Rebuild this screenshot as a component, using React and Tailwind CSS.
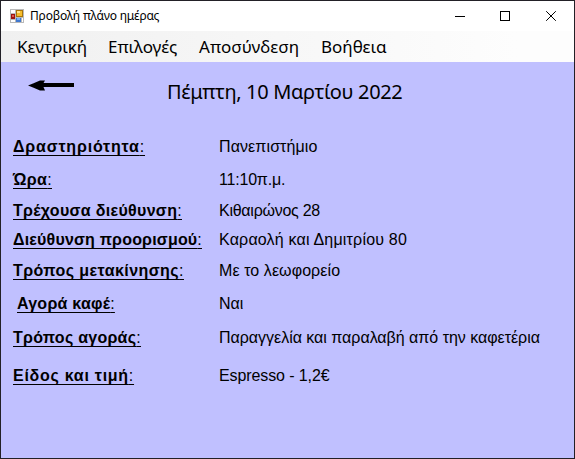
const MENU = [
  { text: "Κεντρική", cls: "w-[91px] tracking-[-0.1px]" },
  { text: "Επιλογές", cls: "w-[91px] tracking-[-0.05px]" },
  { text: "Αποσύνδεση", cls: "w-[122px] tracking-[0.05px]" },
  { text: "Βοήθεια", cls: "w-[90px] tracking-[0px]" },
];

const ROWS = [
  { label: "Δραστηριότητα", value: "Πανεπιστήμιο", row: "", l: "tracking-[0.81px]", v: "tracking-[0.1px]" },
  { label: "Ώρα", value: "11:10π.μ.", row: "mt-[13px]", l: "tracking-[0.35px]", v: "tracking-[-0.2px]" },
  { label: "Τρέχουσα διεύθυνση", value: "Κιθαιρώνος 28", row: "mt-[11px]", l: "tracking-[0.32px]", v: "tracking-[-0.26px]" },
  { label: "Διεύθυνση προορισμού", value: "Καραολή και Δημιτρίου 80", row: "mt-[9px]", l: "tracking-[0.18px]", v: "tracking-[0.19px]" },
  { label: "Τρόπος μετακίνησης", value: "Με το λεωφορείο", row: "mt-[11px]", l: "tracking-[0.43px]", v: "tracking-[0.08px]" },
  { label: "Αγορά καφέ", value: "Ναι", row: "mt-[13px]", l: "ml-1 tracking-[0.25px]", v: "tracking-[0px]" },
  { label: "Τρόπος αγοράς", value: "Παραγγελία και παραλαβή από την καφετέρια", row: "mt-[14px]", l: "tracking-[0.26px]", v: "tracking-[-0.02px]" },
  { label: "Είδος και τιμή", value: "Espresso - 1,2€", row: "mt-[18px]", l: "tracking-[0.73px]", v: "tracking-[-0.1px]" },
];

function FormIcon() {
  return (
    <svg width="14" height="14" viewBox="0 0 14 14" shapeRendering="crispEdges">
      <rect width="14" height="14" fill="#b9b9b9" />
      <rect x="1" y="1" width="4" height="3" fill="#fff" />
      <rect x="1" y="11" width="4" height="2" fill="#fff" />
      <rect x="12" y="9" width="1" height="4" fill="#fff" />
      <rect x="1" y="5" width="4" height="5" fill="#9c1410" />
      <rect x="2" y="6" width="2" height="2" fill="#e0584c" />
      <rect x="6" y="1" width="7" height="7" fill="#a87408" />
      <rect x="7" y="2" width="5" height="5" fill="#f6bd2c" />
      <rect x="7" y="2" width="3" height="2" fill="#ffe38a" />
      <rect x="6" y="9" width="5" height="4" fill="#3f78d0" />
      <rect x="7" y="9" width="3" height="2" fill="#79b0f5" />
    </svg>
  );
}

function TitleBar() {
  return (
    <header className="flex h-[30px] items-center bg-white pl-[9px]">
      <FormIcon />
      <h1 className="ml-[6px] flex-1 whitespace-nowrap font-['Noto_Sans','Open_Sans',sans-serif] text-[12px] leading-4 tracking-[-0.17px]">
        Προβολή πλάνο ημέρας
      </h1>
      <svg width="102" height="10" viewBox="0 0 102 10" className="mr-[17px]" fill="none" stroke="#000">
        <path d="M0 5.5H10" shapeRendering="crispEdges" />
        <path d="M45.5 .5H54.5V9.5H45.5Z" shapeRendering="crispEdges" />
        <path d="M91.200 .2L100.8 9.8M100.8 .2L91.2 9.8" />
      </svg>
    </header>
  );
}

export default function App() {
  return (
    <div className="flex h-[459px] w-[575px] flex-col overflow-hidden border border-[#222026] bg-[#c0c0ff] text-black">
      <TitleBar />
      <nav className="flex h-[31px] items-center bg-linear-to-r from-[#f0f0f0] to-[#fdfdfd] to-90% pl-4 font-['Noto_Sans','Open_Sans',sans-serif] text-[17px] leading-6">
        {MENU.map((m) => (
          <span key={m.text} className={`whitespace-nowrap ${m.cls}`}>{m.text}</span>
        ))}
      </nav>
      <div className="flex h-[75px] items-start">
        <svg width="47" height="12" viewBox="0 0 47 12" className="ml-[27px] mt-[17px]">
          <path d="M0 6.500L5 4.500L12 1.500H17L15.500 4H46V8H15.500L17 11.500H12L5 8.500Z" fill="#000" />
        </svg>
        <h2 className="ml-[92px] mt-[16px] whitespace-nowrap font-['Noto_Sans','Open_Sans',sans-serif] text-[20px] leading-7 tracking-[-0.35px]">
          Πέμπτη, 10 Μαρτίου 2022
        </h2>
      </div>
      <main className="pl-3 font-['Liberation_Sans',Arial,sans-serif] text-[16px] leading-5">
        {ROWS.map((r) => (
          <div key={r.label} className={`flex h-5 whitespace-nowrap ${r.row}`}>
            <div className="w-[206px] shrink-0">
              <span className={`inline-block underline decoration-1 underline-offset-[3px] [text-decoration-skip-ink:none] ${r.l}`}>
                <span className="font-bold">{r.label}</span>:
              </span>
            </div>
            <span className={r.v}>{r.value}</span>
          </div>
        ))}
      </main>
    </div>
  );
}
